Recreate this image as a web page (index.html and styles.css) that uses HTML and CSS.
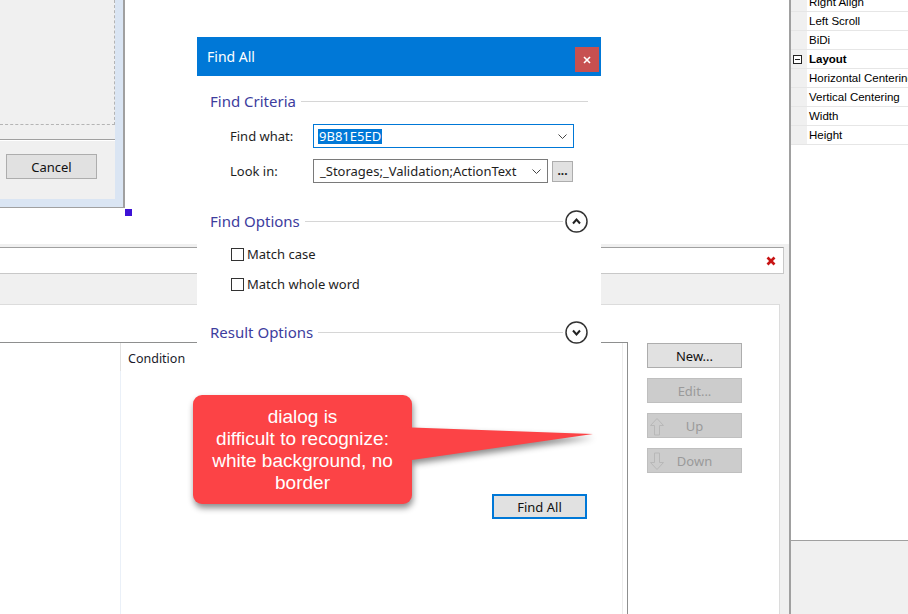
FILE: index.html
```html
<!DOCTYPE html>
<html lang="en">
<head>
  <meta charset="UTF-8" />
  <meta name="viewport" content="width=device-width, initial-scale=1.0"/>
  <title>Find All</title>
  <link rel="stylesheet" href="styles.css">
</head>
<body>
  <div class="workspace">
    <div class="main-area">
      <!-- designer canvas with the form being edited -->
      <div class="canvas">
        <div class="form-window">
          <div class="form-client">
            <div class="dashed-area"></div>
            <div class="form-separator"></div>
            <div class="form-buttons">
              <button class="win-btn">Cancel</button>
            </div>
          </div>
          <span class="sel-handle"></span>
        </div>
      </div>

      <div class="bottom-panel">
        <div class="filter-box">
          <svg class="clear-x" width="10" height="10" viewBox="0 0 10 10">
            <line x1="1.5" y1="1.5" x2="8.5" y2="8.5" stroke="#c81414" stroke-width="2.6"/>
            <line x1="8.5" y1="1.5" x2="1.5" y2="8.5" stroke="#c81414" stroke-width="2.6"/>
          </svg>
        </div>
        <div class="panel-band"></div>
        <div class="panel-content">
          <div class="rule-table">
            <div class="table-inner">
              <div class="table-head">
                <div class="col-a"></div>
                <div class="col-b">Condition</div>
              </div>
              <div class="table-body">
                <div class="col-a"></div>
                <div class="col-b"></div>
              </div>
            </div>
          </div>
          <div class="side-buttons">
            <button class="win-btn">New...</button>
            <button class="win-btn" disabled>Edit...</button>
            <button class="win-btn icon-btn" disabled>
              <svg class="btn-icon" width="16" height="19" viewBox="0 0 16 19">
                <path d="M8 1.5 L14.5 8.5 L10.5 8.5 L10.5 18 L5.5 18 L5.5 8.5 L1.5 8.5 Z" fill="none" stroke="#b8b8b8"/>
              </svg>
              Up
            </button>
            <button class="win-btn icon-btn" disabled>
              <svg class="btn-icon" width="16" height="19" viewBox="0 0 16 19">
                <path d="M5.5 1 L10.5 1 L10.5 10.5 L14.5 10.5 L8 17.5 L1.5 10.5 L5.5 10.5 Z" fill="none" stroke="#b8b8b8"/>
              </svg>
              Down
            </button>
          </div>
        </div>
      </div>
    </div>

    <div class="props-panel">
      <div class="prop-grid">
        <div class="prop-row first"><span class="prop-margin"></span><span class="prop-name">Right Align</span></div>
        <div class="prop-row"><span class="prop-margin"></span><span class="prop-name">Left Scroll</span></div>
        <div class="prop-row"><span class="prop-margin"></span><span class="prop-name">BiDi</span></div>
        <div class="prop-row category">
          <span class="prop-margin">
            <svg width="9" height="9" viewBox="0 0 9 9">
              <rect x="0.5" y="0.5" width="8" height="8" fill="#fff" stroke="#222"/>
              <line x1="2" y1="4.5" x2="7" y2="4.5" stroke="#222"/>
            </svg>
          </span>
          <span class="prop-name">Layout</span>
        </div>
        <div class="prop-row"><span class="prop-margin"></span><span class="prop-name">Horizontal Centering</span></div>
        <div class="prop-row"><span class="prop-margin"></span><span class="prop-name">Vertical Centering</span></div>
        <div class="prop-row"><span class="prop-margin"></span><span class="prop-name">Width</span></div>
        <div class="prop-row"><span class="prop-margin"></span><span class="prop-name">Height</span></div>
      </div>
    </div>
  </div>

  <!-- floating Find All dialog -->
  <div class="dialog">
    <div class="dialog-title">
      <span>Find All</span>
      <button class="close-btn">
        <svg width="8" height="8" viewBox="0 0 8 8">
          <line x1="1" y1="1" x2="7" y2="7" stroke="#fff" stroke-width="1.6"/>
          <line x1="7" y1="1" x2="1" y2="7" stroke="#fff" stroke-width="1.6"/>
        </svg>
      </button>
    </div>

    <div class="dialog-body">
      <div class="section-head">
        <span class="section-label">Find Criteria</span>
        <span class="section-rule"></span>
      </div>

      <div class="field-row">
        <label class="field-label">Find what:</label>
        <div class="combo combo-focus">
          <span class="combo-text"><span class="selected">9B81E5ED</span></span>
          <svg width="9" height="5" viewBox="0 0 9 5"><polyline points="0.5,0.5 4.5,4.5 8.5,0.5" fill="none" stroke="#444"/></svg>
        </div>
      </div>

      <div class="field-row second">
        <label class="field-label">Look in:</label>
        <div class="combo combo-short">
          <span class="combo-text">_Storages;_Validation;ActionText</span>
          <svg width="9" height="5" viewBox="0 0 9 5"><polyline points="0.5,0.5 4.5,4.5 8.5,0.5" fill="none" stroke="#444"/></svg>
        </div>
        <button class="dots-btn">...</button>
      </div>

      <div class="section-head options">
        <span class="section-label">Find Options</span>
        <span class="section-rule"></span>
        <svg class="toggle" width="23" height="23" viewBox="0 0 23 23">
          <circle cx="11.5" cy="11.5" r="10.5" fill="#fff" stroke="#333" stroke-width="1.5"/>
          <polyline points="8,13.5 11.5,9.5 15,13.5" fill="none" stroke="#222" stroke-width="2"/>
        </svg>
      </div>

      <div class="check-row">
        <span class="check-box"></span>
        <span>Match case</span>
      </div>
      <div class="check-row second">
        <span class="check-box"></span>
        <span>Match whole word</span>
      </div>

      <div class="section-head results">
        <span class="section-label">Result Options</span>
        <span class="section-rule"></span>
        <svg class="toggle" width="23" height="23" viewBox="0 0 23 23">
          <circle cx="11.5" cy="11.5" r="10.5" fill="#fff" stroke="#333" stroke-width="1.5"/>
          <polyline points="8,9.5 11.5,13.5 15,9.5" fill="none" stroke="#222" stroke-width="2"/>
        </svg>
      </div>

      <div class="dialog-actions">
        <button class="win-btn default-btn">Find All</button>
      </div>
    </div>
  </div>

  <div class="callout">
    <div class="callout-box">
      dialog is<br>
      difficult to recognize:<br>
      white background, no<br>
      border
    </div>
  </div>
</body>
</html>
```

FILE: styles.css
```css
* {
  box-sizing: border-box;
  margin: 0;
  padding: 0;
}

body {
  font-family: "Noto Sans", "Open Sans", sans-serif;
  font-size: 13px;
  color: #1e1e1e;
  background: #fff;
  width: 908px;
  height: 614px;
  overflow: hidden;
}

button {
  font-family: inherit;
}

.workspace {
  display: grid;
  grid-template-columns: 789px 119px;
  height: 614px;
}

.main-area {
  display: flex;
  flex-direction: column;
}

/* designer canvas */
.canvas {
  height: 244px;
  background: #fff;
}

.form-window {
  position: relative;
  width: 125px;
  height: 208px;
  background: #dae5f3;
  border-right: 2px solid #a0a0a0;
  border-bottom: 1px solid #a0a0a0;
}

.form-client {
  width: 115px;
  height: 199px;
  background: #f0f0f0;
  display: flex;
  flex-direction: column;
}

.dashed-area {
  width: 115px;
  height: 125px;
  border-right: 1px dashed #b4b4b4;
  border-bottom: 1px dashed #b4b4b4;
}

.form-separator {
  margin-top: 14px;
  height: 2px;
  background: #a0a0a0;
  border-bottom: 1px solid #fff;
}

.form-buttons {
  padding: 13px 0 0 6px;
}

.sel-handle {
  position: absolute;
  left: 125px;
  top: 209px;
  width: 7px;
  height: 7px;
  background: #3d12d6;
}

.win-btn {
  width: 91px;
  height: 25px;
  background: #e1e1e1;
  border: 1px solid #adadad;
  font-size: 13px;
  color: #111;
}

/* bottom panel */
.bottom-panel {
  flex: 1;
  background: #f0f0f0;
  padding-top: 3px;
  display: flex;
  flex-direction: column;
}

.filter-box {
  height: 27px;
  margin-right: 5px;
  background: #fff;
  border-top: 1px solid #a0a0a0;
  border-bottom: 1px solid #c8c8c8;
  border-right: 1px solid #c8c8c8;
  display: flex;
  align-items: center;
  justify-content: flex-end;
  padding-right: 7px;
}

.panel-band {
  height: 30px;
}

.panel-content {
  flex: 1;
  margin-right: 9px;
  background: #fff;
  border-top: 1px solid #dcdcdc;
  border-right: 1px solid #dcdcdc;
  padding-top: 37px;
  display: flex;
  align-items: flex-start;
}

.rule-table {
  width: 628px;
  align-self: stretch;
  border-top: 1px solid #8e8f8f;
  border-right: 1px solid #8e8f8f;
}

.table-inner {
  height: 100%;
  margin-right: 4px;
  border-right: 1px solid #ececec;
  display: flex;
  flex-direction: column;
}

.table-head {
  display: flex;
  height: 28px;
}

.table-head .col-a {
  width: 121px;
  border-right: 1px solid #e2e2e2;
}

.table-head .col-b {
  padding: 7px 0 0 7px;
  font-size: 12.5px;
  color: #1a1a2a;
}

.table-body {
  flex: 1;
  display: flex;
}

.table-body .col-a {
  width: 121px;
  border-right: 1px solid #eaf0f8;
}

.side-buttons {
  margin: 1px 0 0 19px;
  display: flex;
  flex-direction: column;
  gap: 10px;
}

.side-buttons .win-btn {
  width: 95px;
}

.win-btn:disabled {
  background: #cccccc;
  border-color: #bfbfbf;
  color: #9a9a9a;
}

.icon-btn {
  position: relative;
}

.btn-icon {
  position: absolute;
  left: 1px;
  top: 3px;
}

/* property grid */
.props-panel {
  border-left: 2px solid #a0a0a0;
  background: #f0f0f0;
  overflow: hidden;
}

.prop-grid {
  height: 541px;
  background: #fff;
  border-bottom: 1px solid #a0a0a0;
  overflow: hidden;
  font-family: "Liberation Sans", Arial, sans-serif;
  font-size: 11.5px;
  color: #000;
}

.prop-row {
  display: flex;
  height: 19px;
  border-bottom: 1px solid #e6e6e6;
}

.prop-row.first {
  margin-top: -7px;
}

.prop-margin {
  width: 16px;
  flex-shrink: 0;
  background: #f0f0f0;
  display: flex;
  align-items: center;
  padding-left: 2px;
}

.prop-name {
  padding-left: 2px;
  line-height: 18px;
  white-space: nowrap;
}

.category .prop-name {
  font-weight: bold;
}

/* dialog */
.dialog {
  position: absolute;
  left: 197px;
  top: 37px;
  width: 404px;
  height: 493px;
  background: #fff;
}

.dialog-title {
  height: 39px;
  background: #0078d7;
  color: #fff;
  font-size: 14px;
  display: flex;
  align-items: center;
  padding-left: 10px;
}

.close-btn {
  margin: 10px 2px 0 auto;
  align-self: flex-start;
  width: 24px;
  height: 25px;
  background: #c75050;
  border: none;
  display: flex;
  align-items: center;
  justify-content: center;
}

.dialog-body {
  padding: 13px 13px 0 13px;
}

.section-head {
  display: flex;
  align-items: center;
  height: 24px;
}

.section-label {
  font-size: 15px;
  color: #3d3d9e;
  margin-right: 5px;
}

.section-rule {
  flex: 1;
  height: 1px;
  background: #d6d6d6;
}

.toggle {
  margin-left: 2px;
}

.section-head.options {
  margin-top: 26px;
}

.section-head.results {
  margin-top: 28px;
}

.field-row {
  display: flex;
  align-items: center;
  height: 24px;
  margin: 11px 0 0 20px;
}

.field-label {
  width: 83px;
}

.combo {
  height: 24px;
  width: 261px;
  border: 1px solid #7a7a7a;
  display: flex;
  align-items: center;
  justify-content: space-between;
  padding: 0 6px 0 6px;
  white-space: nowrap;
}

.combo-focus {
  border-color: #0078d7;
  padding-left: 4px;
}

.combo-short {
  width: 235px;
}

.selected {
  background: #0078d7;
  color: #fff;
  padding: 0 1px;
  line-height: 15px;
  display: inline-block;
}

.dots-btn {
  margin-left: 4px;
  width: 21px;
  height: 21px;
  background: #e1e1e1;
  border: 1px solid #adadad;
  font-size: 12px;
  font-weight: bold;
  line-height: 14px;
  color: #222;
}

.check-row {
  display: flex;
  align-items: center;
  gap: 3px;
  height: 16px;
  margin: 13px 0 0 21px;
}

.check-row.second {
  margin-top: 14px;
}

.check-box {
  width: 13px;
  height: 13px;
  border: 1px solid #333;
  background: #fff;
}

.dialog-actions {
  display: flex;
  justify-content: flex-end;
  margin-top: 150px;
  padding-right: 1px;
}

.default-btn {
  width: 95px;
  border: 2px solid #0078d7;
}

/* annotation */
.callout {
  position: absolute;
  left: 193px;
  top: 395px;
  width: 219px;
  height: 109px;
  filter: drop-shadow(1px 4px 3px rgba(0, 0, 0, 0.45));
}

.callout-box {
  height: 100%;
  background: #fc4346;
  border-radius: 9px;
  color: #fff;
  font-family: "Liberation Sans", Arial, sans-serif;
  font-size: 19px;
  line-height: 22px;
  text-align: center;
  padding-top: 11px;
}

.callout::after {
  content: "";
  position: absolute;
  left: 205px;
  top: 30px;
  width: 195px;
  height: 40px;
  background: #fc4346;
  clip-path: polygon(0 2px, 100% 9px, 0 37px);
}
```
